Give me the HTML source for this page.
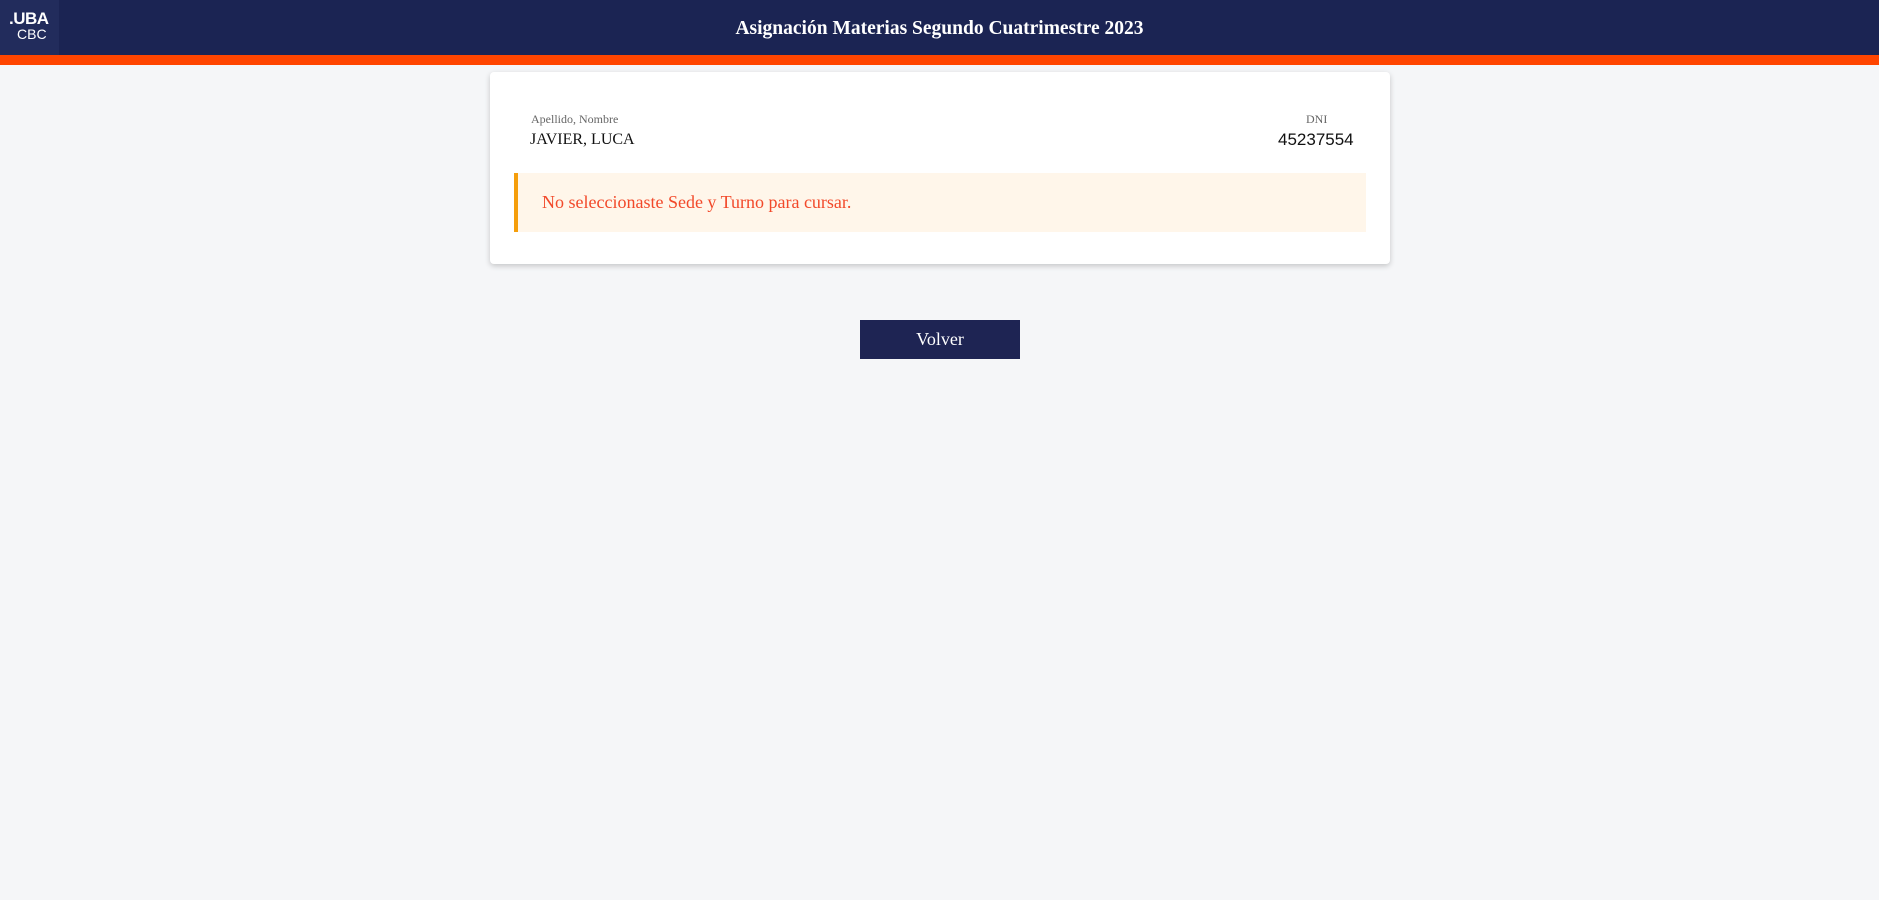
<!DOCTYPE html>
<html><head><meta charset="utf-8"><style>
html,body{margin:0;padding:0;width:1879px;height:900px;background:#f5f6f8;overflow:hidden;font-family:"Liberation Serif",serif;}
.hdr{position:absolute;left:0;top:0;width:1879px;height:55px;background:#1b2453;}
.bar{position:absolute;left:0;top:55px;width:1879px;height:10px;background:#ff4500;}
.logo{position:absolute;left:0;top:0;width:59px;height:55px;background:#222c5c;color:#fff;font-family:"Liberation Sans",sans-serif;text-align:center;}
.logo .a{position:absolute;left:9px;top:10px;font-size:17px;font-weight:bold;line-height:17px;letter-spacing:-0.5px}
.logo .b{position:absolute;left:17px;top:27px;font-size:14px;line-height:14px;}
.title{position:absolute;left:0;width:1879px;top:17px;text-align:center;color:#fff;font-weight:bold;font-size:19.5px;line-height:24px;}
.card{position:absolute;left:490px;top:72px;width:900px;height:192px;background:#fff;border-radius:4px;box-shadow:0 2px 6px rgba(0,0,0,0.2);}
.lbl{position:absolute;font-size:12px;color:#666;line-height:14px;}
.val{position:absolute;font-size:16px;color:#111;line-height:20px;}
.alert{position:absolute;left:24px;top:101px;width:848px;height:59px;background:#fff6ea;border-left:4px solid #f59e0b;}
.alert span{position:absolute;left:24px;top:18px;font-size:18px;color:#f2492a;line-height:22px;}
.btn{position:absolute;left:860px;top:320px;width:160px;height:39px;background:#1e2453;color:#fff;font-size:18px;text-align:center;line-height:39px;}
</style></head><body>
<div class="hdr"></div><div class="bar"></div>
<div class="logo"><div class="a">.UBA</div><div class="b">CBC</div></div>
<div class="title">Asignación Materias Segundo Cuatrimestre 2023</div>
<div class="card">
<div class="lbl" style="left:41px;top:40px">Apellido, Nombre</div>
<div class="val" style="left:40px;top:58px">JAVIER, LUCA</div>
<div class="lbl" style="left:816px;top:40px;width:20px;text-align:center">DNI</div>
<div class="val" style="left:788px;top:58px;font-family:'Liberation Sans',sans-serif;font-size:17px">45237554</div>
<div class="alert"><span>No seleccionaste Sede y Turno para cursar.</span></div>
</div>
<div class="btn">Volver</div>
</body></html>
